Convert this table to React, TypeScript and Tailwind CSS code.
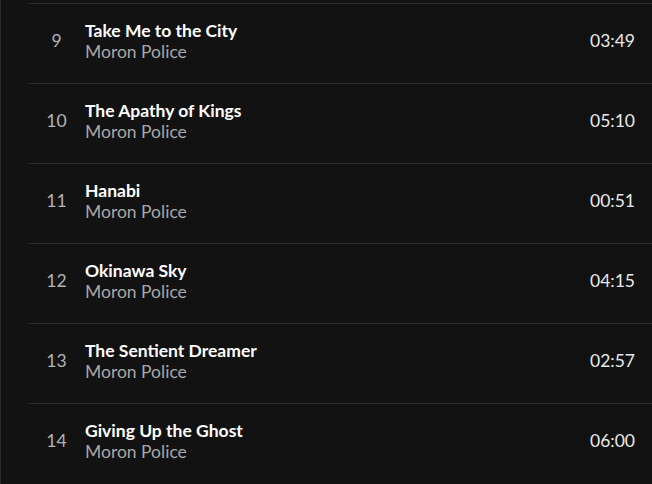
const tracks = [
  { n: 9, title: "Take Me to the City", time: "03:49" },
  { n: 10, title: "The Apathy of Kings", time: "05:10" },
  { n: 11, title: "Hanabi", time: "00:51" },
  { n: 12, title: "Okinawa Sky", time: "04:15" },
  { n: 13, title: "The Sentient Dreamer", time: "02:57" },
  { n: 14, title: "Giving Up the Ghost", time: "06:00" },
];

export default function App() {
  return (
    <div className="w-[652px] h-[484px] overflow-hidden bg-[#121212] flex font-['Lato',sans-serif]">
      {/* scrollbar edge */}
      <div className="w-px bg-[#2a2a2a]" />
      <div className="ml-[27px] flex-1 pt-[3px]">
        {tracks.map((t) => (
          <div
            key={t.n}
            className="h-20 border-t border-[#2a2a2a] flex items-center pb-[5px]"
          >
            <div className="w-[57px] text-center text-[17.5px] text-[#b3b3b3]">{t.n}</div>
            <div className="flex-1 flex flex-col leading-[21px]">
              <span className="text-[17.5px] font-bold text-white">{t.title}</span>
              <span className="text-[17.5px] text-[#a7a7a7]">Moron Police</span>
            </div>
            <div className="pr-[17px] text-[17.5px] text-[#e8e8e8]">{t.time}</div>
          </div>
        ))}
      </div>
    </div>
  );
}
